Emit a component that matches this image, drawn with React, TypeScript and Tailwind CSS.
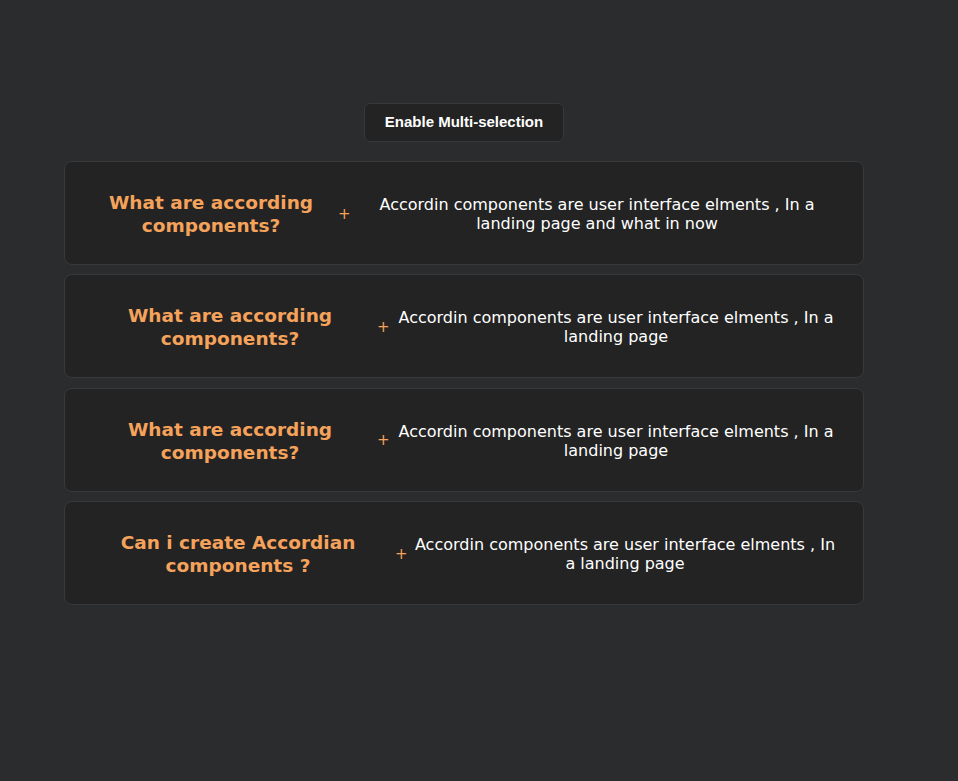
import React from "react";

type Item = {
  q: string[];
  a: string;
  hl: number;
  pl: number;
  al: number;
  aw: number;
};

const items: Item[] = [
  { q: ["What are according", "components?"], a: "Accordin components are user interface elments , In a landing page and what in now", hl: 17, pl: 338, al: 374, aw: 446 },
  { q: ["What are according", "components?"], a: "Accordin components are user interface elments , In a landing page", hl: 36, pl: 377, al: 393, aw: 446 },
  { q: ["What are according", "components?"], a: "Accordin components are user interface elments , In a landing page", hl: 36, pl: 377, al: 393, aw: 446 },
  { q: ["Can i create Accordian", "components ?"], a: "Accordin components are user interface elments , In a landing page", hl: 44, pl: 395, al: 411, aw: 428 },
];

function Card({ it }: { it: Item }) {
  const headLeft = 64 + it.hl;
  const headRight = headLeft + 260;
  return (
    <div className="flex h-[104px] items-center rounded-[8px] border border-[#38393b] bg-[#232323] pt-[2px]">
      <div style={{ marginLeft: it.hl - 1 }} className="w-[260px] text-center text-[18.5px] font-bold leading-[23px] text-[#f5a25b] [font-family:'DejaVu_Sans',Verdana,sans-serif]">
        {it.q[0]}
        <br />
        {it.q[1]}
      </div>
      <div style={{ marginLeft: it.pl - headRight }} className="w-[10px] text-center text-[15px] leading-none text-[#f5a25b] [font-family:'DejaVu_Sans',sans-serif]">
        +
      </div>
      <div style={{ marginLeft: it.al - (it.pl + 10), width: it.aw }} className="text-center text-[16px] leading-[19px] text-white [font-family:'DejaVu_Sans',Verdana,sans-serif]">
        {it.a}
      </div>
    </div>
  );
}

export default function App() {
  return (
    <div className="min-h-[781px] w-full bg-[#2b2c2e]">
      <div className="ml-[64px] flex w-[800px] flex-col pt-[103px]">
        <div className="flex justify-center">
          <button className="h-[39px] w-[200px] rounded-[6px] border border-[#38393b] bg-[#232323] text-[15px] font-bold text-white [font-family:'Liberation_Sans',Arial,sans-serif]">
            Enable Multi-selection
          </button>
        </div>
        <div className="mt-[19px] flex flex-col gap-[9.4px]">
          {items.map((it, i) => (
            <Card key={i} it={it} />
          ))}
        </div>
      </div>
    </div>
  );
}
